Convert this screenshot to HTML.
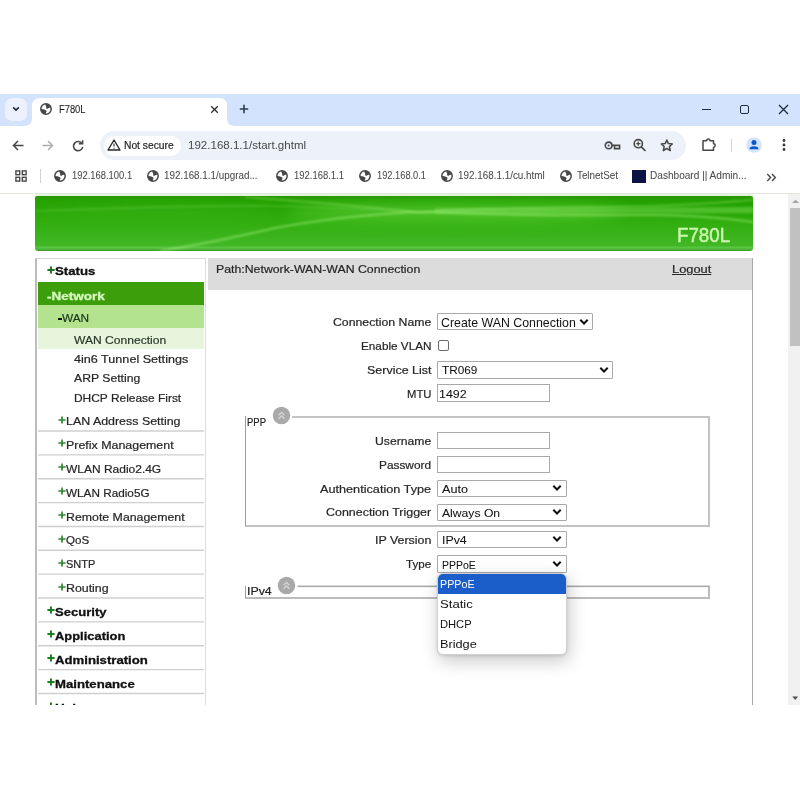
<!DOCTYPE html>
<html><head><meta charset="utf-8">
<style>
*{margin:0;padding:0;box-sizing:border-box}
html,body{width:800px;height:800px;background:#fff;overflow:hidden;font-family:"Liberation Sans",sans-serif}
.a{position:absolute;white-space:nowrap}
#tabstrip{position:absolute;left:0;top:94px;width:800px;height:32px;background:#d3e3fd}
#toolbar{position:absolute;left:0;top:126px;width:800px;height:68px;background:#fff}
#bmline{position:absolute;left:0;top:193px;width:800px;height:1px;background:#e3e6ea}
#page{position:absolute;left:0;top:0;width:788px;height:705px;overflow:hidden}
#sb{position:absolute;left:788px;top:194px;width:12px;height:511px;background:#f1f1f1}
.ct{font-size:12px;color:#3c4043}
.bm{font-size:9.6px;color:#474747;top:172px}
.sep{position:absolute;left:38px;width:166px;height:1px;background:#dedede}
.inp{position:absolute;border:1px solid #a9a9a9;background:#fff}
.sel{position:absolute;border:1px solid #a9a9a9;background:#fff;border-radius:1px}
</style></head><body>
<svg width="0" height="0" style="position:absolute"><defs>
<symbol id="globe" viewBox="0 0 12 12"><circle cx="6" cy="6" r="5.2" fill="#fff" stroke="#474747" stroke-width="1.5"/><path d="M5.2 0.8 C7.5 0.6 10 1.8 11.2 4.4 C9.8 4.8 8.6 4.6 7.8 5.6 C7 6.4 6 5.8 6.2 4.6 C6.4 3.6 5.4 2.8 5.2 0.8 Z" fill="#474747"/><path d="M0.8 6 C2.2 5.8 4 6.4 5.4 6.9 C6.6 7.3 6.9 8.3 6.2 9.2 C5.6 10 5.8 10.8 5.9 11.3 C3 11.2 1 9 0.8 6 Z" fill="#474747"/></symbol>
</defs></svg>
<!-- tab strip -->
<div class="a" style="left:0;top:94px;width:800px;height:32px;background:#d3e3fd"></div>
<div class="a" style="left:5px;top:97.5px;width:22px;height:23px;border-radius:7px;background:#ecf1fd"></div>
<svg class="a" style="left:10px;top:104px" width="12" height="10" viewBox="0 0 12 10"><path d="M3.2 3.4 L6 6.1 L8.8 3.4" fill="none" stroke="#1d2745" stroke-width="1.6"/></svg>
<!-- active tab -->
<svg class="a" style="left:24px;top:98px" width="212" height="28" viewBox="0 0 212 28"><path d="M0 28 Q8 28 8 20 L8 8 Q8 0 16 0 L195 0 Q203 0 203 8 L203 20 Q203 28 211 28 Z" fill="#fff"/></svg>
<svg class="a" style="left:40px;top:103px" width="12" height="12"><use href="#globe"/></svg>
<svg class="a" style="left:210px;top:105px" width="9" height="9" viewBox="0 0 9 9"><path d="M1.2 1.2 L7.8 7.8 M7.8 1.2 L1.2 7.8" stroke="#2a2a2a" stroke-width="1.25"/></svg>
<svg class="a" style="left:239px;top:104px" width="10" height="10" viewBox="0 0 10 10"><path d="M5 0.8 V9.2 M0.8 5 H9.2" stroke="#2f3a4a" stroke-width="1.6"/></svg>
<!-- window controls -->
<div class="a" style="left:701.5px;top:108.6px;width:9px;height:1.4px;background:#1f2a3a"></div>
<div class="a" style="left:740px;top:105px;width:9.2px;height:8.6px;border:1.4px solid #1f2a3a;border-radius:2px"></div>
<svg class="a" style="left:778px;top:104px" width="11" height="11" viewBox="0 0 11 11"><path d="M1 1 L10 10 M10 1 L1 10" stroke="#1f2a3a" stroke-width="1.3"/></svg>
<!-- toolbar -->
<svg class="a" style="left:12px;top:140px" width="12" height="11" viewBox="0 0 12 11"><path d="M11.5 5.5 H1.5 M6 1 L1.5 5.5 L6 10" fill="none" stroke="#474747" stroke-width="1.5"/></svg>
<svg class="a" style="left:42px;top:140px" width="12" height="11" viewBox="0 0 12 11"><path d="M0.5 5.5 H10.5 M6 1 L10.5 5.5 L6 10" fill="none" stroke="#aeaeae" stroke-width="1.5"/></svg>
<svg class="a" style="left:72px;top:139.5px" width="12" height="12" viewBox="0 0 12 12"><path d="M10 3.6 A4.6 4.6 0 1 0 10.7 6.8" fill="none" stroke="#474747" stroke-width="1.6"/><path d="M6.8 3.8 L10.6 3.8 L10.6 0.2" fill="none" stroke="#474747" stroke-width="1.6"/></svg>
<div class="a" style="left:100px;top:131.3px;width:586px;height:29px;border-radius:14.5px;background:#edf2fa"></div>
<div class="a" style="left:104px;top:135.5px;width:77px;height:20.5px;border-radius:10px;background:#fff"></div>
<svg class="a" style="left:107px;top:139px" width="14" height="12" viewBox="0 0 14 12"><path d="M7 1 L13 11 H1 Z" fill="none" stroke="#2a2a2a" stroke-width="1.4" stroke-linejoin="round"/><path d="M7 4.5 V7.6 M7 8.7 V9.7" stroke="#2a2a2a" stroke-width="1.1"/></svg>
<!-- omnibox icons -->
<svg class="a" style="left:604px;top:141px" width="17" height="9" viewBox="0 0 17 9"><circle cx="4.6" cy="4.4" r="3.3" fill="none" stroke="#474747" stroke-width="1.6"/><circle cx="4.6" cy="4.4" r="1" fill="#474747"/><path d="M7.9 4.4 H15.6 V7.6 H10.5 V5.2" fill="none" stroke="#474747" stroke-width="1.6"/></svg>
<svg class="a" style="left:632px;top:137.5px" width="15" height="15" viewBox="0 0 15 15"><circle cx="6.3" cy="5.7" r="4.1" fill="none" stroke="#474747" stroke-width="1.6"/><path d="M6.3 3.6 V7.8 M4.2 5.7 H8.4" stroke="#474747" stroke-width="1.3"/><path d="M9.3 8.8 L13.5 13" stroke="#474747" stroke-width="1.7"/></svg>
<svg class="a" style="left:660px;top:139px" width="14" height="13" viewBox="0 0 14 13"><path d="M6.8 1 L8.4 4.6 L12.3 5 L9.4 7.6 L10.3 11.6 L6.8 9.5 L3.3 11.6 L4.2 7.6 L1.3 5 L5.2 4.6 Z" fill="none" stroke="#474747" stroke-width="1.5" stroke-linejoin="round"/></svg>
<svg class="a" style="left:701px;top:137px" width="17" height="15" viewBox="0 0 17 15"><path d="M2 3.8 H5.6 A1.7 1.7 0 0 1 9 3.8 H12.5 V6.8 A1.7 1.7 0 0 1 12.5 10.2 V13.3 H2 Z" fill="none" stroke="#474747" stroke-width="1.5" stroke-linejoin="round"/></svg>
<div class="a" style="left:730.5px;top:139px;width:1px;height:13px;background:#d0d4da"></div>
<svg class="a" style="left:746px;top:137px" width="16" height="16" viewBox="0 0 16 16"><circle cx="8" cy="8" r="7.8" fill="#d3e3fd"/><circle cx="8" cy="5.6" r="2.5" fill="#0b57d0"/><path d="M3.4 12.2 Q3.6 9.2 8 9.2 Q12.4 9.2 12.6 12.2 Z" fill="#0b57d0"/></svg>
<svg class="a" style="left:781px;top:138px" width="6" height="14" viewBox="0 0 6 14"><circle cx="3" cy="2.5" r="1.4" fill="#3a3a3a"/><circle cx="3" cy="7" r="1.4" fill="#3a3a3a"/><circle cx="3" cy="11.5" r="1.4" fill="#3a3a3a"/></svg>
<!-- bookmarks bar -->
<svg class="a" style="left:15px;top:170px" width="12" height="12" viewBox="0 0 12 12"><g fill="none" stroke="#474747" stroke-width="1.4"><rect x="0.9" y="0.9" width="3.8" height="3.8"/><rect x="7.3" y="0.9" width="3.8" height="3.8"/><rect x="0.9" y="7.3" width="3.8" height="3.8"/><rect x="7.3" y="7.3" width="3.8" height="3.8"/></g></svg>
<div class="a" style="left:40px;top:169px;width:1px;height:14px;background:#d0d4da"></div>
<svg class="a" style="left:54px;top:170.2px" width="12" height="12"><use href="#globe"/></svg>
<svg class="a" style="left:147px;top:170.2px" width="12" height="12"><use href="#globe"/></svg>
<svg class="a" style="left:276.4px;top:170.2px" width="12" height="12"><use href="#globe"/></svg>
<svg class="a" style="left:359px;top:170.2px" width="12" height="12"><use href="#globe"/></svg>
<svg class="a" style="left:441px;top:170.2px" width="12" height="12"><use href="#globe"/></svg>
<svg class="a" style="left:560px;top:170.2px" width="12" height="12"><use href="#globe"/></svg>
<div class="a" style="left:632px;top:169.5px;width:14px;height:13.5px;background:#0c1445"></div>
<svg class="a" style="left:766px;top:172.5px" width="11" height="9" viewBox="0 0 11 9"><path d="M1.3 1 L4.6 4.5 L1.3 8 M6 1 L9.3 4.5 L6 8" fill="none" stroke="#474747" stroke-width="1.4"/></svg>
<div class="a" style="left:0;top:193px;width:800px;height:1px;background:#e2e8e0"></div>

<div id="page">
<!-- header -->
<div class="a" style="left:35px;top:194px;width:718px;height:2px;background:#e4f4dc"></div>
<div class="a" style="left:35px;top:196px;width:718px;height:55px;border-radius:2px 2px 3px 3px;background:linear-gradient(180deg,#2a9208 0%,#23a000 6%,#26a404 22%,#30ad0e 45%,#3bb41c 75%,#42b726 90%,#5ac646 94%,#4cb438 97%,#3a9826 100%);overflow:hidden">
<svg width="718" height="55" viewBox="0 0 718 55" style="position:absolute;left:0;top:0">
<defs><filter id="bl" x="-10%" y="-50%" width="120%" height="200%"><feGaussianBlur stdDeviation="1"/></filter>
<filter id="bl2" x="-50%" y="-200%" width="200%" height="500%"><feGaussianBlur stdDeviation="7"/></filter></defs>
<ellipse cx="420" cy="16" rx="170" ry="8" fill="rgba(120,225,80,0.5)" filter="url(#bl2)"/>
<ellipse cx="120" cy="14" rx="120" ry="5" fill="rgba(110,220,70,0.2)" filter="url(#bl2)"/>
<g filter="url(#bl)" fill="none">
<path d="M0 15 C80 12 160 9 240 10 C300 11 340 14 385 16" stroke="rgba(190,255,150,0.18)" stroke-width="1.6"/>
<path d="M125 55 C170 48 205 40 240 32 C290 23 340 17 390 16 C440 18 530 20 615 19 C660 19 690 22 718 26" stroke="rgba(190,255,150,0.42)" stroke-width="2"/>
<path d="M210 1 C270 5 330 11 385 16 C430 13 520 11 615 10 C660 9 690 6 718 4" stroke="rgba(190,255,150,0.32)" stroke-width="1.7"/>
<path d="M400 15 C500 15 600 15 718 14" stroke="rgba(150,235,110,0.35)" stroke-width="6"/>
</g>
</svg>
</div>
<!-- menu -->
<div class="a" style="left:35px;top:258px;width:171px;height:460px;border-left:2px solid #bdbdbd;border-top:1px solid #d8d8d8;border-right:1px solid #dcdcdc"></div>
<div class="a" style="left:38px;top:282px;width:166px;height:23px;background:#3d9e0c"></div>
<div class="a" style="left:38px;top:305px;width:166px;height:23px;background:#b4e38f"></div>
<div class="a" style="left:38px;top:328px;width:166px;height:21px;background:#e6f5dc"></div>




<!-- plus/minus signs -->
<svg class="a" style="left:47.20px;top:266.00px" width="8" height="8" viewBox="0 0 8 8"><path d="M4 0.6 V7.4 M0.4 4 H7.6" stroke="#1d7524" stroke-width="2"/></svg>
<svg class="a" style="left:58.40px;top:415.60px" width="8" height="8" viewBox="0 0 8 8"><path d="M4 0.6 V7.4 M0.4 4 H7.6" stroke="#2c8a33" stroke-width="1.7"/></svg>
<svg class="a" style="left:58.40px;top:439.46px" width="8" height="8" viewBox="0 0 8 8"><path d="M4 0.6 V7.4 M0.4 4 H7.6" stroke="#2c8a33" stroke-width="1.7"/></svg>
<svg class="a" style="left:58.40px;top:463.32px" width="8" height="8" viewBox="0 0 8 8"><path d="M4 0.6 V7.4 M0.4 4 H7.6" stroke="#2c8a33" stroke-width="1.7"/></svg>
<svg class="a" style="left:58.40px;top:487.18px" width="8" height="8" viewBox="0 0 8 8"><path d="M4 0.6 V7.4 M0.4 4 H7.6" stroke="#2c8a33" stroke-width="1.7"/></svg>
<svg class="a" style="left:58.40px;top:511.04px" width="8" height="8" viewBox="0 0 8 8"><path d="M4 0.6 V7.4 M0.4 4 H7.6" stroke="#2c8a33" stroke-width="1.7"/></svg>
<svg class="a" style="left:58.40px;top:534.90px" width="8" height="8" viewBox="0 0 8 8"><path d="M4 0.6 V7.4 M0.4 4 H7.6" stroke="#2c8a33" stroke-width="1.7"/></svg>
<svg class="a" style="left:58.40px;top:558.76px" width="8" height="8" viewBox="0 0 8 8"><path d="M4 0.6 V7.4 M0.4 4 H7.6" stroke="#2c8a33" stroke-width="1.7"/></svg>
<svg class="a" style="left:58.40px;top:582.62px" width="8" height="8" viewBox="0 0 8 8"><path d="M4 0.6 V7.4 M0.4 4 H7.6" stroke="#2c8a33" stroke-width="1.7"/></svg>
<svg class="a" style="left:47.20px;top:606.38px" width="8" height="8" viewBox="0 0 8 8"><path d="M4 0.6 V7.4 M0.4 4 H7.6" stroke="#1d7d24" stroke-width="2"/></svg>
<svg class="a" style="left:47.20px;top:630.24px" width="8" height="8" viewBox="0 0 8 8"><path d="M4 0.6 V7.4 M0.4 4 H7.6" stroke="#1d7d24" stroke-width="2"/></svg>
<svg class="a" style="left:47.20px;top:654.10px" width="8" height="8" viewBox="0 0 8 8"><path d="M4 0.6 V7.4 M0.4 4 H7.6" stroke="#1d7d24" stroke-width="2"/></svg>
<svg class="a" style="left:47.20px;top:677.96px" width="8" height="8" viewBox="0 0 8 8"><path d="M4 0.6 V7.4 M0.4 4 H7.6" stroke="#1d7d24" stroke-width="2"/></svg>
<svg class="a" style="left:47.20px;top:701.82px" width="8" height="8" viewBox="0 0 8 8"><path d="M4 0.6 V7.4 M0.4 4 H7.6" stroke="#1d7d24" stroke-width="2"/></svg>
<svg class="a" style="left:0;top:0" width="210" height="705"><line x1="38" x2="204" y1="431.00" y2="431.00" stroke="#cfcfcf" stroke-width="1.4"/><line x1="38" x2="204" y1="454.86" y2="454.86" stroke="#cfcfcf" stroke-width="1.4"/><line x1="38" x2="204" y1="478.72" y2="478.72" stroke="#cfcfcf" stroke-width="1.4"/><line x1="38" x2="204" y1="502.58" y2="502.58" stroke="#cfcfcf" stroke-width="1.4"/><line x1="38" x2="204" y1="526.44" y2="526.44" stroke="#cfcfcf" stroke-width="1.4"/><line x1="38" x2="204" y1="550.30" y2="550.30" stroke="#cfcfcf" stroke-width="1.4"/><line x1="38" x2="204" y1="574.16" y2="574.16" stroke="#cfcfcf" stroke-width="1.4"/><line x1="38" x2="204" y1="598.02" y2="598.02" stroke="#cfcfcf" stroke-width="1.4"/><line x1="38" x2="204" y1="621.88" y2="621.88" stroke="#cfcfcf" stroke-width="1.4"/><line x1="38" x2="204" y1="645.74" y2="645.74" stroke="#cfcfcf" stroke-width="1.4"/><line x1="38" x2="204" y1="669.60" y2="669.60" stroke="#cfcfcf" stroke-width="1.4"/><line x1="38" x2="204" y1="693.46" y2="693.46" stroke="#cfcfcf" stroke-width="1.4"/></svg>
<div class="a" style="left:58px;top:317.5px;width:4px;height:2px;background:#111"></div>
<!-- main -->
<div class="a" style="left:208px;top:258px;width:544px;height:32px;background:#dcdcdc"></div>
<div class="a" style="left:752px;top:258px;width:1px;height:460px;background:#a8a8a8"></div>
<!-- form controls -->
<div class="sel" style="left:437px;top:313px;width:156px;height:17px"></div>
<div class="a" style="left:438px;top:340px;width:11px;height:11px;border:1px solid #6a6a6a;border-radius:2px"></div>
<div class="sel" style="left:437px;top:361px;width:176px;height:18px"></div>
<div class="inp" style="left:437px;top:384px;width:113px;height:18px"></div>
<!-- PPP fieldset -->
<div class="a" style="left:245px;top:416px;width:465px;height:110.5px;border:2px solid #c2c2c2;border-left:1px solid #9c9c9c;border-top:none"></div>
<div class="a" style="left:292px;top:416px;width:418px;height:2px;background:#c4c4c4"></div>
<div class="inp" style="left:437px;top:432px;width:113px;height:17px"></div>
<div class="inp" style="left:437px;top:456px;width:113px;height:17px"></div>
<div class="sel" style="left:437px;top:480px;width:130px;height:17px"></div>
<div class="sel" style="left:437px;top:504px;width:130px;height:17px"></div>
<div class="sel" style="left:437px;top:531px;width:130px;height:17px"></div>
<div class="sel" style="left:437px;top:555px;width:130px;height:18px"></div>
<!-- IPv4 fieldset -->
<div class="a" style="left:245px;top:586px;width:465px;height:13px;border:2px solid #bcbcbc;border-left:1px solid #9c9c9c;border-top:none"></div>
<svg class="a" style="left:0;top:0" width="720" height="600"><rect x="297.5" y="585.6" width="412" height="1.5" fill="#a6a6a6"/></svg>
<svg class="a" style="left:272.00px;top:406.10px" width="19" height="19" viewBox="0 0 19 19"><circle cx="9.5" cy="9.5" r="8.7" fill="#a9a9a9"/><path d="M6.6 9.3 L9.5 6.4 L12.4 9.3 M6.6 12.8 L9.5 9.9 L12.4 12.8" fill="none" stroke="#d6d6d6" stroke-width="1.3"/></svg><svg class="a" style="left:277.10px;top:575.80px" width="19" height="19" viewBox="0 0 19 19"><circle cx="9.5" cy="9.5" r="8.7" fill="#a9a9a9"/><path d="M6.6 9.3 L9.5 6.4 L12.4 9.3 M6.6 12.8 L9.5 9.9 L12.4 12.8" fill="none" stroke="#d6d6d6" stroke-width="1.3"/></svg>
<svg class="a" style="left:579.00px;top:317.50px" width="10" height="8" viewBox="0 0 10 8"><path d="M1.3 1.8 L5 5.5 L8.7 1.8" fill="none" stroke="#111" stroke-width="2"/></svg><svg class="a" style="left:599.00px;top:366.00px" width="10" height="8" viewBox="0 0 10 8"><path d="M1.3 1.8 L5 5.5 L8.7 1.8" fill="none" stroke="#111" stroke-width="2"/></svg><svg class="a" style="left:552.40px;top:484.00px" width="10" height="8" viewBox="0 0 10 8"><path d="M1.3 1.8 L5 5.5 L8.7 1.8" fill="none" stroke="#111" stroke-width="2"/></svg><svg class="a" style="left:552.40px;top:508.30px" width="10" height="8" viewBox="0 0 10 8"><path d="M1.3 1.8 L5 5.5 L8.7 1.8" fill="none" stroke="#111" stroke-width="2"/></svg><svg class="a" style="left:552.40px;top:535.30px" width="10" height="8" viewBox="0 0 10 8"><path d="M1.3 1.8 L5 5.5 L8.7 1.8" fill="none" stroke="#111" stroke-width="2"/></svg><svg class="a" style="left:552.40px;top:559.80px" width="10" height="8" viewBox="0 0 10 8"><path d="M1.3 1.8 L5 5.5 L8.7 1.8" fill="none" stroke="#111" stroke-width="2"/></svg>
<!-- dropdown popup -->
<div class="a" style="left:437px;top:573px;width:130px;height:82px;border-radius:6px;background:#fff;border:1px solid #d0d0d0;box-shadow:2px 6px 18px rgba(0,0,0,0.22),0 1px 3px rgba(0,0,0,0.12);overflow:hidden">
<div style="position:absolute;left:0;top:0;width:130px;height:20px;background:#1b5ec9"></div>
</div>

<div class="a" style="left:59.24px;top:103.86px;font-size:10.8px;line-height:10.8px;font-weight:normal;color:#1f1f1f;transform:scaleX(0.8665);transform-origin:0 0;-webkit-text-stroke:0.1px #1f1f1f;font-family:'Liberation Sans',sans-serif;">F780L</div>
<div class="a" style="left:123.66px;top:139.88px;font-size:10.6px;line-height:10.6px;font-weight:normal;color:#1f1f1f;transform:scaleX(0.9686);transform-origin:0 0;-webkit-text-stroke:0.2px #1f1f1f;font-family:'Liberation Sans',sans-serif;">Not secure</div>
<div class="a" style="left:187.95px;top:139.65px;font-size:11.4px;line-height:11.4px;font-weight:normal;color:#474747;transform:scaleX(1.0136);transform-origin:0 0;font-family:'Liberation Sans',sans-serif;">192.168.1.1/start.ghtml</div>
<div class="a" style="left:71.74px;top:170.37px;font-size:10.9px;line-height:10.9px;font-weight:normal;color:#4a4a4a;transform:scaleX(0.8634);transform-origin:0 0;-webkit-text-stroke:0.05px #4a4a4a;font-family:'Liberation Sans',sans-serif;">192.168.100.1</div>
<div class="a" style="left:164.24px;top:170.37px;font-size:10.9px;line-height:10.9px;font-weight:normal;color:#4a4a4a;transform:scaleX(0.9038);transform-origin:0 0;-webkit-text-stroke:0.05px #4a4a4a;font-family:'Liberation Sans',sans-serif;">192.168.1.1/upgrad...</div>
<div class="a" style="left:293.99px;top:170.37px;font-size:10.9px;line-height:10.9px;font-weight:normal;color:#4a4a4a;transform:scaleX(0.8670);transform-origin:0 0;-webkit-text-stroke:0.05px #4a4a4a;font-family:'Liberation Sans',sans-serif;">192.168.1.1</div>
<div class="a" style="left:376.54px;top:170.37px;font-size:10.9px;line-height:10.9px;font-weight:normal;color:#4a4a4a;transform:scaleX(0.8520);transform-origin:0 0;-webkit-text-stroke:0.05px #4a4a4a;font-family:'Liberation Sans',sans-serif;">192.168.0.1</div>
<div class="a" style="left:458.49px;top:170.37px;font-size:10.9px;line-height:10.9px;font-weight:normal;color:#4a4a4a;transform:scaleX(0.9066);transform-origin:0 0;-webkit-text-stroke:0.05px #4a4a4a;font-family:'Liberation Sans',sans-serif;">192.168.1.1/cu.html</div>
<div class="a" style="left:576.74px;top:170.37px;font-size:10.9px;line-height:10.9px;font-weight:normal;color:#4a4a4a;transform:scaleX(0.9000);transform-origin:0 0;-webkit-text-stroke:0.05px #4a4a4a;font-family:'Liberation Sans',sans-serif;">TelnetSet</div>
<div class="a" style="left:650.24px;top:170.37px;font-size:10.9px;line-height:10.9px;font-weight:normal;color:#4a4a4a;transform:scaleX(0.9259);transform-origin:0 0;-webkit-text-stroke:0.05px #4a4a4a;font-family:'Liberation Sans',sans-serif;">Dashboard || Admin...</div>
<div class="a" style="left:55.23px;top:266.29px;font-size:11px;line-height:11px;font-weight:bold;color:#111;transform:scaleX(1.1991);transform-origin:0 0;-webkit-text-stroke:0.3px #111;font-family:'Liberation Sans',sans-serif;">Status</div>
<div class="a" style="left:47.23px;top:290.79px;font-size:11px;line-height:11px;font-weight:bold;color:#d8f8c0;transform:scaleX(1.2293);transform-origin:0 0;-webkit-text-stroke:0.3px #d8f8c0;font-family:'Liberation Sans',sans-serif;">-Network</div>
<div class="a" style="left:61.73px;top:313.09px;font-size:11px;line-height:11px;font-weight:normal;color:#1a3a1a;transform:scaleX(1.0759);transform-origin:0 0;-webkit-text-stroke:0.2px #1a3a1a;font-family:'Liberation Sans',sans-serif;">WAN</div>
<div class="a" style="left:74.23px;top:335.09px;font-size:11px;line-height:11px;font-weight:normal;color:#2a3a2a;transform:scaleX(1.0981);transform-origin:0 0;-webkit-text-stroke:0.2px #2a3a2a;font-family:'Liberation Sans',sans-serif;">WAN Connection</div>
<div class="a" style="left:74.23px;top:354.09px;font-size:11px;line-height:11px;font-weight:normal;color:#262626;transform:scaleX(1.1462);transform-origin:0 0;-webkit-text-stroke:0.2px #262626;font-family:'Liberation Sans',sans-serif;">4in6 Tunnel Settings</div>
<div class="a" style="left:74.23px;top:373.49px;font-size:11px;line-height:11px;font-weight:normal;color:#262626;transform:scaleX(1.1086);transform-origin:0 0;-webkit-text-stroke:0.2px #262626;font-family:'Liberation Sans',sans-serif;">ARP Setting</div>
<div class="a" style="left:74.23px;top:392.89px;font-size:11px;line-height:11px;font-weight:normal;color:#262626;transform:scaleX(1.0846);transform-origin:0 0;-webkit-text-stroke:0.2px #262626;font-family:'Liberation Sans',sans-serif;">DHCP Release First</div>
<div class="a" style="left:66.23px;top:416.19px;font-size:11px;line-height:11px;font-weight:normal;color:#262626;transform:scaleX(1.1283);transform-origin:0 0;-webkit-text-stroke:0.2px #262626;font-family:'Liberation Sans',sans-serif;">LAN Address Setting</div>
<div class="a" style="left:66.23px;top:440.05px;font-size:11px;line-height:11px;font-weight:normal;color:#262626;transform:scaleX(1.1284);transform-origin:0 0;-webkit-text-stroke:0.2px #262626;font-family:'Liberation Sans',sans-serif;">Prefix Management</div>
<div class="a" style="left:66.23px;top:463.91px;font-size:11px;line-height:11px;font-weight:normal;color:#262626;transform:scaleX(1.0888);transform-origin:0 0;-webkit-text-stroke:0.2px #262626;font-family:'Liberation Sans',sans-serif;">WLAN Radio2.4G</div>
<div class="a" style="left:66.23px;top:487.77px;font-size:11px;line-height:11px;font-weight:normal;color:#262626;transform:scaleX(1.0678);transform-origin:0 0;-webkit-text-stroke:0.2px #262626;font-family:'Liberation Sans',sans-serif;">WLAN Radio5G</div>
<div class="a" style="left:66.23px;top:511.63px;font-size:11px;line-height:11px;font-weight:normal;color:#262626;transform:scaleX(1.1215);transform-origin:0 0;-webkit-text-stroke:0.2px #262626;font-family:'Liberation Sans',sans-serif;">Remote Management</div>
<div class="a" style="left:66.23px;top:535.49px;font-size:11px;line-height:11px;font-weight:normal;color:#262626;transform:scaleX(1.0518);transform-origin:0 0;-webkit-text-stroke:0.2px #262626;font-family:'Liberation Sans',sans-serif;">QoS</div>
<div class="a" style="left:66.23px;top:559.35px;font-size:11px;line-height:11px;font-weight:normal;color:#262626;transform:scaleX(1.0020);transform-origin:0 0;-webkit-text-stroke:0.2px #262626;font-family:'Liberation Sans',sans-serif;">SNTP</div>
<div class="a" style="left:66.23px;top:583.21px;font-size:11px;line-height:11px;font-weight:normal;color:#262626;transform:scaleX(1.1243);transform-origin:0 0;-webkit-text-stroke:0.2px #262626;font-family:'Liberation Sans',sans-serif;">Routing</div>
<div class="a" style="left:55.23px;top:607.07px;font-size:11px;line-height:11px;font-weight:bold;color:#111;transform:scaleX(1.1873);transform-origin:0 0;-webkit-text-stroke:0.3px #111;font-family:'Liberation Sans',sans-serif;">Security</div>
<div class="a" style="left:55.23px;top:630.93px;font-size:11px;line-height:11px;font-weight:bold;color:#111;transform:scaleX(1.1737);transform-origin:0 0;-webkit-text-stroke:0.3px #111;font-family:'Liberation Sans',sans-serif;">Application</div>
<div class="a" style="left:55.23px;top:654.79px;font-size:11px;line-height:11px;font-weight:bold;color:#111;transform:scaleX(1.1957);transform-origin:0 0;-webkit-text-stroke:0.3px #111;font-family:'Liberation Sans',sans-serif;">Administration</div>
<div class="a" style="left:55.23px;top:678.65px;font-size:11px;line-height:11px;font-weight:bold;color:#111;transform:scaleX(1.1962);transform-origin:0 0;-webkit-text-stroke:0.3px #111;font-family:'Liberation Sans',sans-serif;">Maintenance</div>
<div class="a" style="left:55.23px;top:702.51px;font-size:11px;line-height:11px;font-weight:bold;color:#111;transform:scaleX(1.2311);transform-origin:0 0;-webkit-text-stroke:0.3px #111;font-family:'Liberation Sans',sans-serif;">Help</div>
<div class="a" style="left:216.23px;top:264.29px;font-size:11px;line-height:11px;font-weight:normal;color:#262626;transform:scaleX(1.1186);transform-origin:0 0;-webkit-text-stroke:0.2px #262626;font-family:'Liberation Sans',sans-serif;">Path:Network-WAN-WAN Connection</div>
<div class="a" style="left:672.23px;top:264.29px;font-size:11px;line-height:11px;font-weight:normal;color:#262626;transform:scaleX(1.1672);transform-origin:0 0;-webkit-text-stroke:0.2px #262626;font-family:'Liberation Sans',sans-serif;text-decoration:underline;">Logout</div>
<div class="a" style="left:332.93px;top:316.99px;font-size:11px;line-height:11px;font-weight:normal;color:#262626;transform:scaleX(1.1166);transform-origin:0 0;-webkit-text-stroke:0.2px #262626;font-family:'Liberation Sans',sans-serif;">Connection Name</div>
<div class="a" style="left:360.73px;top:341.29px;font-size:11px;line-height:11px;font-weight:normal;color:#262626;transform:scaleX(1.0670);transform-origin:0 0;-webkit-text-stroke:0.2px #262626;font-family:'Liberation Sans',sans-serif;">Enable VLAN</div>
<div class="a" style="left:366.83px;top:364.89px;font-size:11px;line-height:11px;font-weight:normal;color:#262626;transform:scaleX(1.1334);transform-origin:0 0;-webkit-text-stroke:0.2px #262626;font-family:'Liberation Sans',sans-serif;">Service List</div>
<div class="a" style="left:406.73px;top:389.09px;font-size:11px;line-height:11px;font-weight:normal;color:#262626;transform:scaleX(1.0252);transform-origin:0 0;-webkit-text-stroke:0.2px #262626;font-family:'Liberation Sans',sans-serif;">MTU</div>
<div class="a" style="left:375.03px;top:435.89px;font-size:11px;line-height:11px;font-weight:normal;color:#262626;transform:scaleX(1.1078);transform-origin:0 0;-webkit-text-stroke:0.2px #262626;font-family:'Liberation Sans',sans-serif;">Username</div>
<div class="a" style="left:379.13px;top:460.19px;font-size:11px;line-height:11px;font-weight:normal;color:#262626;transform:scaleX(1.0785);transform-origin:0 0;-webkit-text-stroke:0.2px #262626;font-family:'Liberation Sans',sans-serif;">Password</div>
<div class="a" style="left:320.23px;top:483.79px;font-size:11px;line-height:11px;font-weight:normal;color:#262626;transform:scaleX(1.1519);transform-origin:0 0;-webkit-text-stroke:0.2px #262626;font-family:'Liberation Sans',sans-serif;">Authentication Type</div>
<div class="a" style="left:326.13px;top:507.39px;font-size:11px;line-height:11px;font-weight:normal;color:#262626;transform:scaleX(1.1312);transform-origin:0 0;-webkit-text-stroke:0.2px #262626;font-family:'Liberation Sans',sans-serif;">Connection Trigger</div>
<div class="a" style="left:374.93px;top:534.99px;font-size:11px;line-height:11px;font-weight:normal;color:#262626;transform:scaleX(1.1279);transform-origin:0 0;-webkit-text-stroke:0.2px #262626;font-family:'Liberation Sans',sans-serif;">IP Version</div>
<div class="a" style="left:406.03px;top:559.49px;font-size:11px;line-height:11px;font-weight:normal;color:#262626;transform:scaleX(1.0545);transform-origin:0 0;-webkit-text-stroke:0.2px #262626;font-family:'Liberation Sans',sans-serif;">Type</div>
<div class="a" style="left:247.23px;top:416.89px;font-size:11px;line-height:11px;font-weight:normal;color:#222;transform:scaleX(0.8606);transform-origin:0 0;-webkit-text-stroke:0.2px #222;font-family:'Liberation Sans',sans-serif;">PPP</div>
<div class="a" style="left:246.73px;top:585.69px;font-size:11px;line-height:11px;font-weight:normal;color:#222;transform:scaleX(1.1236);transform-origin:0 0;-webkit-text-stroke:0.2px #222;font-family:'Liberation Sans',sans-serif;">IPv4</div>
<div class="a" style="left:441.49px;top:315.60px;font-size:13px;line-height:13px;font-weight:normal;color:#111;transform:scaleX(0.9505);transform-origin:0 0;font-family:'Liberation Sans',sans-serif;">Create WAN Connection</div>
<div class="a" style="left:441.83px;top:365.29px;font-size:11px;line-height:11px;font-weight:normal;color:#111;transform:scaleX(1.0711);transform-origin:0 0;-webkit-text-stroke:0.05px #111;font-family:'Liberation Sans',sans-serif;">TR069</div>
<div class="a" style="left:438.83px;top:389.29px;font-size:11px;line-height:11px;font-weight:normal;color:#111;transform:scaleX(1.1290);transform-origin:0 0;-webkit-text-stroke:0.05px #111;font-family:'Liberation Sans',sans-serif;">1492</div>
<div class="a" style="left:441.53px;top:484.29px;font-size:11px;line-height:11px;font-weight:normal;color:#111;transform:scaleX(1.1513);transform-origin:0 0;-webkit-text-stroke:0.05px #111;font-family:'Liberation Sans',sans-serif;">Auto</div>
<div class="a" style="left:441.53px;top:507.79px;font-size:11px;line-height:11px;font-weight:normal;color:#111;transform:scaleX(1.1053);transform-origin:0 0;-webkit-text-stroke:0.05px #111;font-family:'Liberation Sans',sans-serif;">Always On</div>
<div class="a" style="left:441.73px;top:535.29px;font-size:11px;line-height:11px;font-weight:normal;color:#111;transform:scaleX(1.1236);transform-origin:0 0;-webkit-text-stroke:0.05px #111;font-family:'Liberation Sans',sans-serif;">IPv4</div>
<div class="a" style="left:441.53px;top:559.79px;font-size:11px;line-height:11px;font-weight:normal;color:#111;transform:scaleX(0.9514);transform-origin:0 0;-webkit-text-stroke:0.05px #111;font-family:'Liberation Sans',sans-serif;">PPPoE</div>
<div class="a" style="left:439.73px;top:578.99px;font-size:11px;line-height:11px;font-weight:normal;color:#fff;transform:scaleX(0.9747);transform-origin:0 0;font-family:'Liberation Sans',sans-serif;">PPPoE</div>
<div class="a" style="left:439.73px;top:598.79px;font-size:11px;line-height:11px;font-weight:normal;color:#111;transform:scaleX(1.1925);transform-origin:0 0;font-family:'Liberation Sans',sans-serif;">Static</div>
<div class="a" style="left:439.73px;top:618.59px;font-size:11px;line-height:11px;font-weight:normal;color:#111;transform:scaleX(1.0142);transform-origin:0 0;font-family:'Liberation Sans',sans-serif;">DHCP</div>
<div class="a" style="left:439.73px;top:638.69px;font-size:11px;line-height:11px;font-weight:normal;color:#111;transform:scaleX(1.1565);transform-origin:0 0;font-family:'Liberation Sans',sans-serif;">Bridge</div>
<div class="a" style="left:677.32px;top:224.65px;font-size:20.5px;line-height:20.5px;font-weight:normal;color:#ccf7b0;transform:scaleX(0.9137);transform-origin:0 0;-webkit-text-stroke:0.5px #ccf7b0;font-family:'Liberation Sans',sans-serif;">F780L</div>
</div>
<div id="sb"></div>
<div class="a" style="left:790px;top:208px;width:10px;height:138px;background:#c1c1c1"></div>
<svg class="a" style="left:788px;top:194px" width="12" height="511" viewBox="0 0 12 511"><path d="M4 9 L7.5 5.8 L11 9 Z" fill="#a3a3a3"/><path d="M4.3 502.6 L7.2 506 L10.1 502.6 Z" fill="#505050"/></svg>
</body></html>
